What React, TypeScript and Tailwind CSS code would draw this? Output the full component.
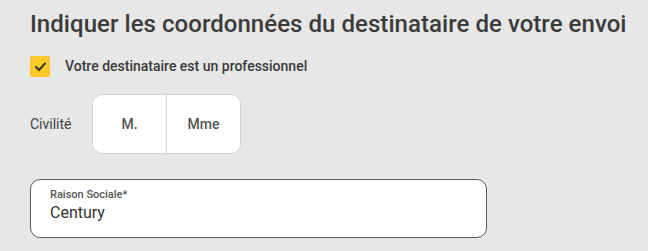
import React, { useState } from 'react';

const App = () => {
  const [isPro, setIsPro] = useState(true);
  const [civilite, setCivilite] = useState<string | null>(null);
  const [raison, setRaison] = useState('Century');

  return (
    <div
      className="min-h-screen w-full bg-[#e7e7e7] px-[30px] pt-[9px]"
      style={{ fontFamily: 'Roboto, "Noto Sans", sans-serif' }}
    >
      <h1 className="whitespace-nowrap text-[24px] leading-[30px] font-medium text-[#3b3b3b] tracking-[0.05px]">
        Indiquer les coordonnées du destinataire de votre envoi
      </h1>

      {/* Case professionnel */}
      <label className="mt-[17px] flex items-center gap-[15px] cursor-pointer">
        <button
          type="button"
          onClick={() => setIsPro(!isPro)}
          className="w-[20px] h-[21px] rounded-[2px] bg-[#fcc92b] flex items-center justify-center"
        >
          {isPro && (
            <svg width="13" height="11" viewBox="0 0 13 11" fill="none">
              <path d="M1.5 5.5 L5 9 L11.5 1.8" stroke="#333" strokeWidth="2" />
            </svg>
          )}
        </button>
        <span className="text-[14px] font-medium text-[#3a3a3a]">
          Votre destinataire est un professionnel
        </span>
      </label>

      {/* Civilité */}
      <div className="mt-[17px] flex items-center">
        <span className="w-[62px] text-[14px] text-[#444]">Civilité</span>
        <div className="flex h-[60px] w-[149px] rounded-[10px] border border-[#d3d3d3] bg-white overflow-hidden">
          {['M.', 'Mme'].map((c, i) => (
            <button
              key={c}
              type="button"
              onClick={() => setCivilite(c)}
              className={
                'flex-1 flex items-center justify-center text-[14px] font-medium text-[#555] ' +
                (i === 0 ? 'border-r border-[#d3d3d3] ' : '') +
                (civilite === c ? 'bg-[#fcc92b]' : '')
              }
            >
              {c}
            </button>
          ))}
        </div>
      </div>

      {/* Raison sociale */}
      <div className="mt-[25px] w-[457px] h-[59px] rounded-[10px] border border-[#5a5a5a] bg-white px-[19px] pt-[8px]">
        <div className="text-[11px] leading-[13px] font-medium text-[#555]">Raison Sociale*</div>
        <input
          value={raison}
          onChange={(e) => setRaison(e.target.value)}
          className="w-full text-[16px] leading-[20px] text-[#333] outline-none bg-transparent"
        />
      </div>
    </div>
  );
};

export default App;
